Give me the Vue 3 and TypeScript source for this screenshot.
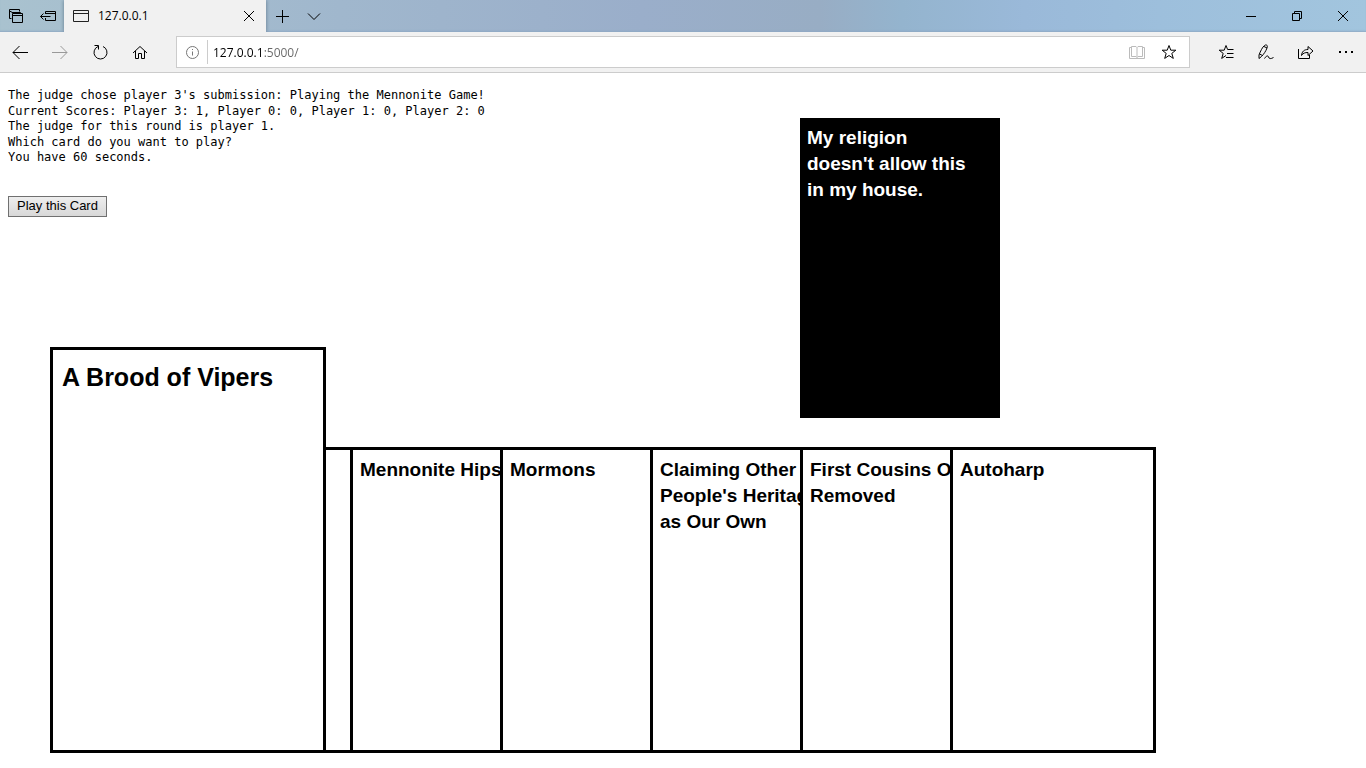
<script setup lang="ts">
import { ref } from 'vue'

interface HandCard {
  id: number
  text: string
}

const address = ref('127.0.0.1:5000/')
const selected = ref(0)

const messages: string[] = [
  "The judge chose player 3's submission: Playing the Mennonite Game!",
  'Current Scores: Player 3: 1, Player 0: 0, Player 1: 0, Player 2: 0',
  'The judge for this round is player 1.',
  'Which card do you want to play?',
  'You have 60 seconds.',
]

const prompt = "My religion\ndoesn't allow this\nin my house."

const hand: HandCard[] = [
  { id: 0, text: 'A Brood of Vipers' },
  { id: 1, text: '' },
  { id: 2, text: 'Mennonite Hipster' },
  { id: 3, text: 'Mormons' },
  { id: 4, text: "Claiming Other\nPeople's Heritage\nas Our Own" },
  { id: 5, text: 'First Cousins Once\nRemoved' },
  { id: 6, text: 'Autoharp' },
]
</script>

<template>
  <div class="browser">
    <header class="titlebar">
      <button class="side" aria-label="Tabs you've set aside">
        <svg viewBox="0 0 16 16"><path d="M3.5 10.5h-2v-9h10v2M1.5 3.5h2M4.5 5.5h10v9h-10zM4.5 7.5h10M3.5 4.5h9v1" /></svg>
      </button>
      <button class="side" aria-label="Set these tabs aside">
        <svg viewBox="0 0 16 16"><path d="M5.5 6V3.5h10v9h-10V10M5.5 5.5h10M.5 8.5h10M3.5 5.5l-3 3 3 3" /></svg>
      </button>
      <div class="tab">
        <svg class="page-icon" viewBox="0 0 16 16"><path d="M.5 2.5h15v11H.5zM.5 5.5h15" /></svg>
        <span class="tab-title">127.0.0.1</span>
        <button class="tab-close" aria-label="Close tab">
          <svg viewBox="0 0 16 16"><path d="M3 3l10 10M13 3L3 13" /></svg>
        </button>
      </div>
      <button class="side" aria-label="New tab">
        <svg viewBox="0 0 16 16"><path d="M8.500 2v13M2 8.500h13" /></svg>
      </button>
      <button class="side" aria-label="Show tab previews">
        <svg viewBox="0 0 16 16"><path d="M2 5.500l6 6 6-6" /></svg>
      </button>
      <div class="window-controls">
        <button aria-label="Minimize">
          <svg viewBox="0 0 16 16"><path d="M3 8.500h10" /></svg>
        </button>
        <button aria-label="Restore">
          <svg viewBox="0 0 16 16"><path d="M3.500 5.500h7v7h-7zM5.500 5.500v-2h7v7h-2" /></svg>
        </button>
        <button aria-label="Close window">
          <svg viewBox="0 0 16 16"><path d="M3 3l10 10M13 3L3 13" /></svg>
        </button>
      </div>
    </header>

    <nav class="toolbar">
      <button class="tool" aria-label="Back">
        <svg viewBox="0 0 16 16"><path d="M1 8.500h15M7.500 2L1 8.500 7.500 15" /></svg>
      </button>
      <button class="tool muted" aria-label="Forward">
        <svg viewBox="0 0 16 16"><path d="M0 8.500h15M8.500 2L15 8.500 8.500 15" /></svg>
      </button>
      <button class="tool" aria-label="Refresh">
        <svg viewBox="0 0 16 16"><path d="M11 2.500a6.500 6.500 0 1 1-5 0M2.500 1.500h4v4" /></svg>
      </button>
      <button class="tool" aria-label="Home">
        <svg viewBox="0 0 16 16"><path d="M1 9l7-6.500L15 9M3.500 7v7.500h3v-5h3v5h3V7" /></svg>
      </button>
      <div class="address">
        <svg class="info" viewBox="0 0 16 16"><circle cx="8.500" cy="8.500" r="6" /><path d="M8.500 7.500v4M8.500 5v1" /></svg>
        <input v-model="address" type="text" aria-label="Address" spellcheck="false" />
        <button class="book" aria-label="Reading view">
          <svg viewBox="0 0 16 16"><path d="M2.500 3.500h-2v11h15v-11h-2M2.500 2.500h4.500l1 1 1-1h4.500v10H9l-1 1-1-1H2.500zM8 3.500v10" /></svg>
        </button>
        <button class="star" aria-label="Add to favorites">
          <svg viewBox="0 0 16 16"><path d="M8 1.500l1.800 4.700h5l-4 3.200 1.500 5L8 11.500l-4.300 2.900 1.500-5-4-3.200h5z" /></svg>
        </button>
      </div>
      <button class="tool" aria-label="Favorites hub">
        <svg viewBox="0 0 16 16"><path d="M8 11.500l-4.300 2.900 1.500-5-4-3.200h5L8 1.500l1.600 4H15.500M9 9.500h6.500M8 13.500h7.500" /></svg>
      </button>
      <button class="tool" aria-label="Add notes">
        <svg viewBox="0 0 16 16"><path d="M1 14.500V11C2.500 7 4.500 3 6.500 1.500 8.500 0 10 1.500 9 4 8 7 5.500 10.500 3.500 12.500zM1.500 10l3 1.500M6 2.500l3 1.500M6.500 14.500c1.500-2.500 3.500-3.500 4-1.500s2.500 2 5 .5" /></svg>
      </button>
      <button class="tool" aria-label="Share">
        <svg viewBox="0 0 16 16"><path d="M.5 5v9.500h11V11M3.500 11.500C4 7.500 6 5.500 10 5.500V2.500l5 4.500-5 4.500v-3c-3 0-5 .5-6.500 3z" /></svg>
      </button>
      <button class="tool" aria-label="More">
        <svg class="dots" viewBox="0 0 16 16"><path d="M1 7h2v2H1zM7 7h2v2H7zM13 7h2v2h-2z" /></svg>
      </button>
    </nav>

    <main>
      <section class="round">
        <div class="status">
          <p v-for="line in messages" :key="line">{{ line }}</p>
          <button class="play">Play this Card</button>
        </div>
        <article class="prompt">{{ prompt }}</article>
      </section>
      <ul class="hand">
        <li
          v-for="card in hand"
          :key="card.id"
          class="card"
          :class="{ selected: card.id === selected }"
          @click="selected = card.id"
        >{{ card.text }}</li>
      </ul>
    </main>
  </div>
</template>

<style>
body {
  margin: 0;
  background: #fff;
}
</style>

<style scoped>
.browser {
  overflow: hidden;
  color: #000;
  font: 12px/16px "Open Sans", "Noto Sans", sans-serif;
}

.browser * {
  box-sizing: border-box;
}

svg {
  display: block;
  width: 16px;
  height: 16px;
  fill: none;
  stroke: currentColor;
  stroke-width: 1;
}

button {
  display: flex;
  align-items: center;
  justify-content: center;
  flex: none;
  padding: 0;
  border: 0;
  background: none;
  color: #000;
}

.titlebar {
  display: flex;
  height: 32px;
  background: linear-gradient(to right, #a9c2cf 0%, #a0b7cd 25%, #9aaeca 47%, #98adc4 60%, #94b4ce 66%, #9ab9d9 75%, #9dbfdc 85%, #a2c5de 100%);
  box-shadow: inset 0 -2px 2px -1px #8fa9c4;
}

.side {
  width: 32px;
}

.tab {
  display: flex;
  align-items: center;
  width: 202px;
  padding: 0 9px;
  background: #f1f1f1;
  box-shadow: 0 0 4px #60788c;
  clip-path: inset(0 -4px 0 -4px);
}

.page-icon {
  margin-right: 9px;
  color: #222;
}

.tab-title {
  flex: 1;
}

.window-controls {
  display: flex;
  margin-left: auto;
}

.window-controls button {
  width: 46px;
}

.toolbar {
  display: flex;
  align-items: center;
  height: 41px;
  border-bottom: 1px solid #ccc;
  background: #f1f1f1;
}

.tool {
  width: 40px;
  height: 40px;
}

.muted {
  color: #999;
}

.address {
  display: flex;
  align-items: center;
  flex: 1;
  height: 32px;
  margin: 0 16px;
  padding-right: 12px;
  border: 1px solid #ccc;
  background: #fff;
}

.info {
  margin: 0 7px;
  color: #777;
}

.address input {
  flex: 1;
  min-width: 0;
  height: 24px;
  padding: 0 0 0 5px;
  border: 0;
  border-left: 1px solid #ccc;
  outline: 0;
  background: linear-gradient(to right, #000 56px, #666 56px);
  background-clip: text;
  color: transparent;
  caret-color: #000;
  font: inherit;
}

.book {
  margin-right: 16px;
  color: #bbb;
}

.dots {
  fill: currentColor;
  stroke: none;
}

.round {
  display: flex;
  padding-left: 8px;
}

.status {
  flex: 0 0 792px;
  padding-top: 15px;
  font-family: "DejaVu Sans Mono", monospace;
  font-size: 12px;
  line-height: 1.3;
}

.status p {
  margin: 0;
}

.play {
  height: 21px;
  margin-top: 30px;
  padding: 0 8px;
  border: 1px solid #707070;
  background: linear-gradient(#eee, #d8d8d8);
  font: 13px/16px "Liberation Sans", Arial, sans-serif;
}

.prompt,
.card {
  font: bold 19px/26px "Liberation Sans", Arial, sans-serif;
  white-space: pre;
}

.prompt {
  width: 200px;
  height: 300px;
  margin-top: 45px;
  padding: 7px;
  background: #000;
  color: #fff;
}

.hand {
  display: flex;
  align-items: flex-end;
  margin: -71px 0 0;
  padding: 0 0 0 50px;
  list-style: none;
}

.card {
  flex: none;
  width: 150px;
  height: 306px;
  padding: 7px 0 7px 7px;
  overflow: hidden;
  border: 3px solid #000;
  border-right-width: 0;
  background: #fff;
}

.card:last-child {
  width: 206px;
  border-right-width: 3px;
}

.card.selected {
  z-index: 1;
  width: 276px;
  height: 406px;
  margin-right: -126px;
  padding: 10px 9px;
  border-right-width: 3px;
  font-size: 25px;
  line-height: 34px;
}
</style>
